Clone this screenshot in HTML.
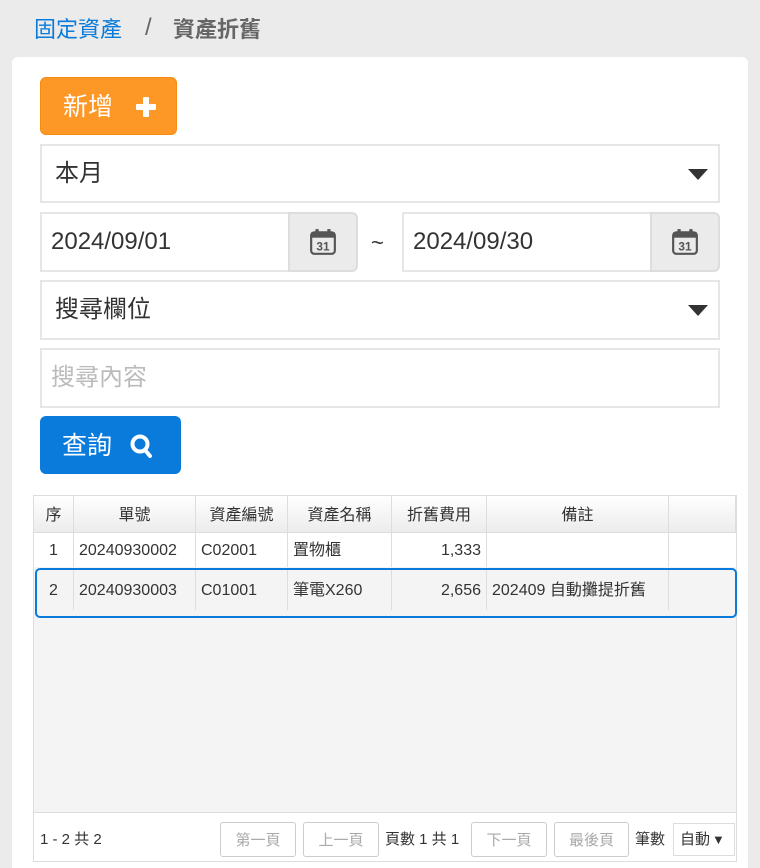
<!DOCTYPE html>
<html><head><meta charset="utf-8"><style>
*{box-sizing:border-box;margin:0;padding:0}
body{width:760px;height:868px;background:#ebebeb;font-family:"Liberation Sans","Noto Sans CJK TC",sans-serif;position:relative;overflow:hidden;color:#333}
.a{position:absolute}
.card{left:12px;top:57px;width:736px;height:811px;background:#fff;border-radius:6px 6px 0 0}
.inp{background:#fff;border:2px solid #e6e6e6;font-size:24px;line-height:1;padding-left:9px;display:flex;align-items:center}
.caret{width:0;height:0;border-left:10px solid transparent;border-right:10px solid transparent;border-top:11px solid #333;position:absolute;right:10px;top:23px}
.cal{background:#ebebeb;border:2px solid #ddd;border-radius:0 6px 6px 0;display:flex;align-items:center;justify-content:center}
.grid{left:33px;top:495px;width:704px;height:318px;border:1px solid #ddd;background:#f4f4f4}
.c{position:absolute;font-size:16px;line-height:1;display:flex;align-items:center;border-right:1px solid #ddd;padding:2px 5px 0;white-space:nowrap}
.btn{position:absolute;top:822px;height:35px;border:1px solid #ccc;border-radius:3px;background:#fff;color:#aaa;font-size:15px;line-height:1;display:flex;align-items:center;justify-content:center;padding-top:2px}
.t{position:absolute;font-size:15px;line-height:1}
</style></head><body>
<div class="a" style="left:34px;top:17px;font-size:22px;line-height:26px;color:#0a7bdb">固定資產</div>
<div class="a" style="left:145px;top:15px;font-size:24px;line-height:26px;color:#666">/</div>
<div class="a" style="left:173px;top:17px;font-size:22px;line-height:26px;color:#666;font-weight:bold">資產折舊</div>
<div class="a card"></div>
<div class="a" style="left:40px;top:77px;width:137px;height:58px;background:#fd9725;border:1px solid #f58b10;border-radius:6px;color:#fff;font-size:25px;line-height:1;display:flex;align-items:center;padding-left:22px;padding-top:2px">新增<svg style="margin-left:22px" width="22" height="22" viewBox="0 0 22 22"><rect x="8" y="1" width="6" height="20" rx="1" fill="#fff"/><rect x="1" y="8" width="20" height="6" rx="1" fill="#fff"/></svg></div>
<div class="a inp" style="left:40px;top:144px;width:680px;height:59px;padding-left:13px">本月<div class="caret"></div></div>
<div class="a inp" style="left:40px;top:212px;width:250px;height:60px">2024/09/01</div>
<div class="a cal" style="left:288px;top:212px;width:70px;height:60px"><svg width="28" height="28" viewBox="0 0 26 26"><rect x="2" y="4" width="22" height="20" rx="3" fill="none" stroke="#555" stroke-width="2"/><rect x="2" y="4" width="22" height="5" fill="#555"/><rect x="6" y="1" width="3" height="6" fill="#555"/><rect x="17" y="1" width="3" height="6" fill="#555"/><text x="13" y="21" font-size="11" font-weight="bold" text-anchor="middle" fill="#555" font-family="Liberation Sans">31</text></svg></div>
<div class="a" style="left:371px;top:232px;font-size:22px;line-height:1">~</div>
<div class="a inp" style="left:402px;top:212px;width:250px;height:60px">2024/09/30</div>
<div class="a cal" style="left:650px;top:212px;width:70px;height:60px"><svg width="28" height="28" viewBox="0 0 26 26"><rect x="2" y="4" width="22" height="20" rx="3" fill="none" stroke="#555" stroke-width="2"/><rect x="2" y="4" width="22" height="5" fill="#555"/><rect x="6" y="1" width="3" height="6" fill="#555"/><rect x="17" y="1" width="3" height="6" fill="#555"/><text x="13" y="21" font-size="11" font-weight="bold" text-anchor="middle" fill="#555" font-family="Liberation Sans">31</text></svg></div>
<div class="a inp" style="left:40px;top:280px;width:680px;height:60px;padding-left:13px">搜尋欄位<div class="caret"></div></div>
<div class="a inp" style="left:40px;top:348px;width:680px;height:60px;color:#bbb">搜尋內容</div>
<div class="a" style="left:40px;top:416px;width:141px;height:58px;background:#0a7bdb;border-radius:6px;color:#fff;font-size:25px;line-height:1;display:flex;align-items:center;padding-left:22px;padding-top:2px">查詢<svg style="margin-left:18px" width="24" height="26" viewBox="0 0 24 26"><circle cx="10" cy="11" r="7.5" fill="none" stroke="#fff" stroke-width="4"/><line x1="15" y1="17" x2="20" y2="23" stroke="#fff" stroke-width="4" stroke-linecap="round"/></svg></div>
<div class="a" style="left:748px;top:488px;width:12px;height:380px;background:#ebebeb"></div>
<div class="a grid"></div>
<div class="a" style="left:34px;top:496px;width:702px;height:37px;background:linear-gradient(#fff,#ececec);border-bottom:1px solid #ddd"></div>
<div class="a" style="left:34px;top:533px;width:702px;height:34px;background:#fff"></div>
<div class="a" style="left:35px;top:568px;width:702px;height:50px;border:2px solid #0a7bdb;border-radius:5px"></div>
<div class="c" style="left:34px;top:496px;width:40px;height:37px;justify-content:center">序</div>
<div class="c" style="left:74px;top:496px;width:122px;height:37px;justify-content:center">單號</div>
<div class="c" style="left:196px;top:496px;width:92px;height:37px;justify-content:center">資產編號</div>
<div class="c" style="left:288px;top:496px;width:104px;height:37px;justify-content:center">資產名稱</div>
<div class="c" style="left:392px;top:496px;width:95px;height:37px;justify-content:center">折舊費用</div>
<div class="c" style="left:487px;top:496px;width:182px;height:37px;justify-content:center">備註</div>
<div class="c" style="left:669px;top:496px;width:67px;height:37px"></div>
<div class="c" style="left:34px;top:533px;width:40px;height:34px;justify-content:center">1</div>
<div class="c" style="left:74px;top:533px;width:122px;height:34px">20240930002</div>
<div class="c" style="left:196px;top:533px;width:92px;height:34px">C02001</div>
<div class="c" style="left:288px;top:533px;width:104px;height:34px">置物櫃</div>
<div class="c" style="left:392px;top:533px;width:95px;height:34px;justify-content:flex-end">1,333</div>
<div class="c" style="left:487px;top:533px;width:182px;height:34px"></div>
<div class="c" style="left:34px;top:570px;width:40px;height:40px;justify-content:center">2</div>
<div class="c" style="left:74px;top:570px;width:122px;height:40px">20240930003</div>
<div class="c" style="left:196px;top:570px;width:92px;height:40px">C01001</div>
<div class="c" style="left:288px;top:570px;width:104px;height:40px">筆電X260</div>
<div class="c" style="left:392px;top:570px;width:95px;height:40px;justify-content:flex-end">2,656</div>
<div class="c" style="left:487px;top:570px;width:182px;height:40px">202409 自動攤提折舊</div>
<div class="a" style="left:33px;top:812px;width:704px;height:50px;border:1px solid #ddd;background:#fff"></div>
<div class="t" style="left:40px;top:832px">1 - 2 共 2</div>
<div class="btn" style="left:220px;width:76px">第一頁</div>
<div class="btn" style="left:303px;width:76px">上一頁</div>
<div class="t" style="left:385px;top:832px">頁數 1 共 1</div>
<div class="btn" style="left:471px;width:76px">下一頁</div>
<div class="btn" style="left:554px;width:75px">最後頁</div>
<div class="t" style="left:635px;top:832px">筆數</div>
<div class="a" style="left:673px;top:823px;width:62px;height:33px;border:1px solid #ddd;font-size:15px;line-height:1;display:flex;align-items:center;padding-left:6px">自動<span style="font-size:13px;margin-left:2px">▼</span></div>
</body></html>
